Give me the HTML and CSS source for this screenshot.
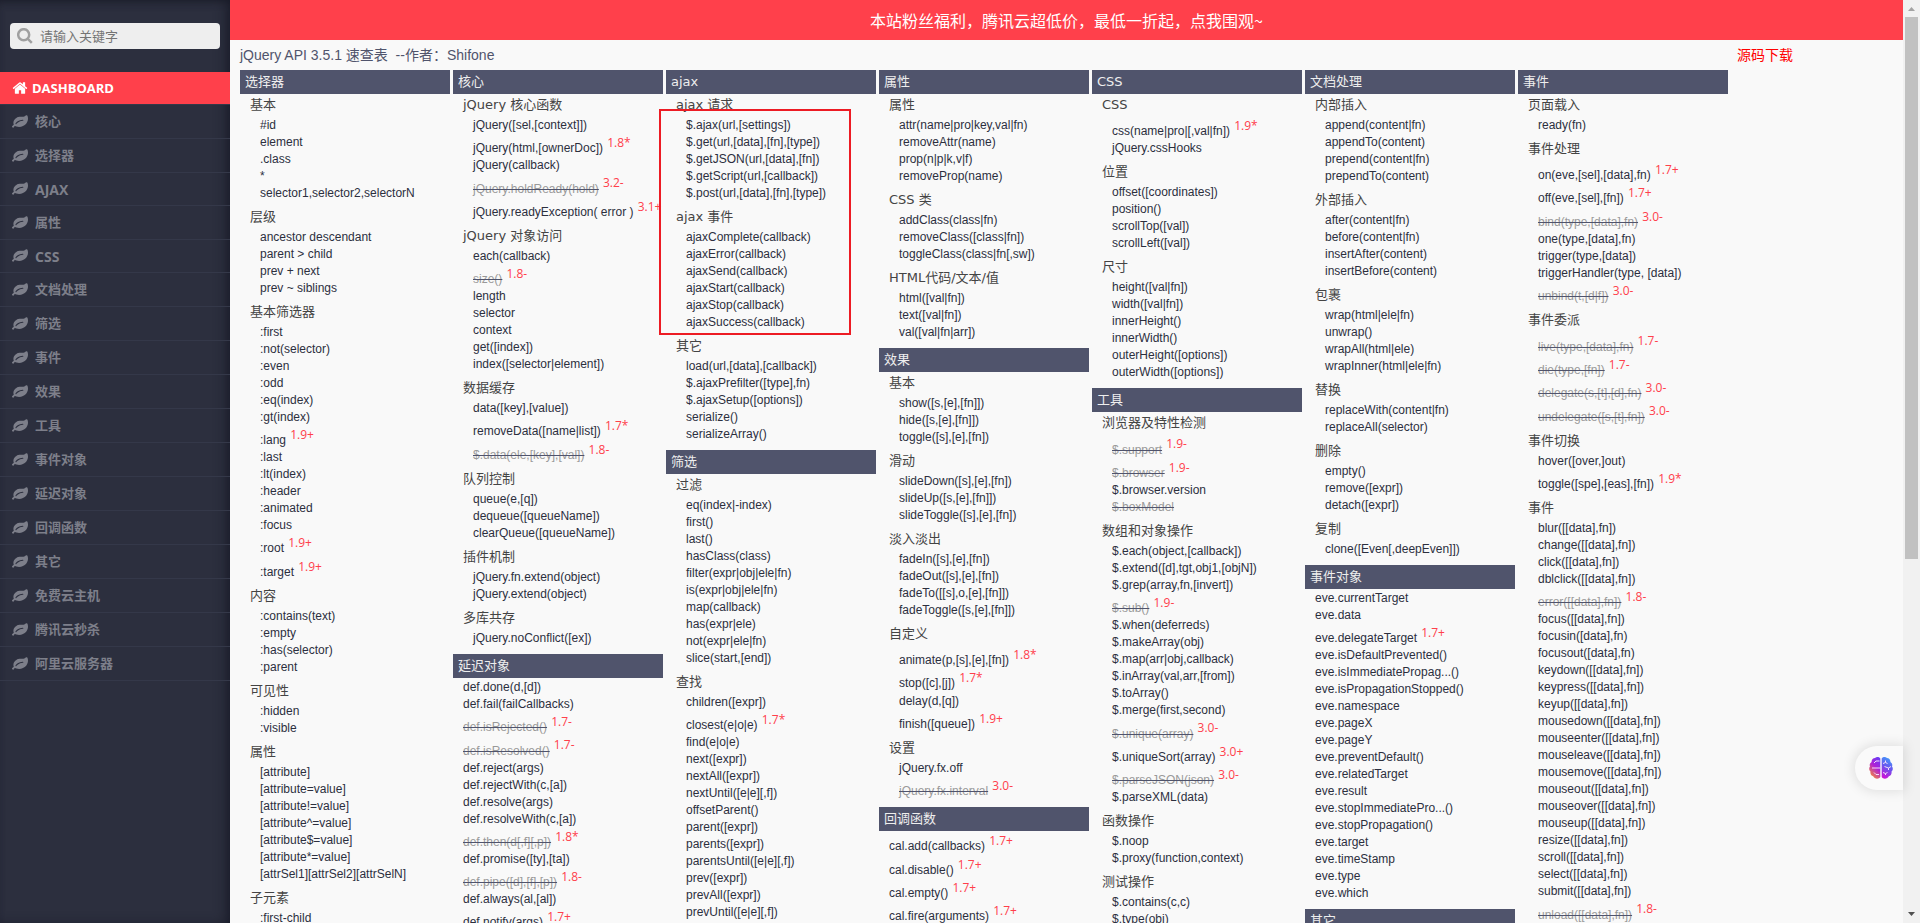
FILE: index.html
```html
<!DOCTYPE html>
<html lang="zh-CN">
<head>
<meta charset="utf-8">
<title>jQuery API 3.5.1 速查表</title>
<link rel="stylesheet" href="styles.css">
</head>
<body>
<svg class="sprite" aria-hidden="true">
<symbol id="leaf" viewBox="0 0 1792 1792"><path d="M1280 704q0-26-19-45t-45-19q-172 0-318 49.500t-259.500 134-234.500 206.500q-20 20-20 42 0 26 19 45t45 19q24 0 45-19 27-24 74-71t67-66q137-124 268.500-176t313.500-52q26 0 45-19t19-45zm512-198q0 95-20 193-46 224-184.500 383t-357.500 268q-214 108-438 108-148 0-286-47-15-5-88-42t-96-37q-16 0-39.500 32t-45 70-52.500 70-60.500 32q-43 0-63.500-17.500t-45.500-59.500q-2-4-6-11t-5.500-10-3-9.500-1.500-13.500q0-35 31-73.500t68-65.500 68-56 31-48q0-4-14-38t-16-44q-9-51-9-104 0-115 43.500-220t119-184.500 170.500-139 204-95.500q55-18 145-25.500t179.500-9 178.500-6 163.500-24 113.500-56.500l29.500-29.500 29.500-28 27-20 36.500-16 43.500-4.500q39 0 70.500 46t47.500 112 24 124 8 96z"/></symbol>
<symbol id="home" viewBox="0 0 1664 1792"><path d="M1408 992v480q0 26-19 45t-45 19H960v-384H704v384H320q-26 0-45-19t-19-45V992q0-1 .5-3t.5-3l575-474 575 474q1 2 1 6zm223-69l-62 74q-8 9-21 11h-3q-13 0-21-7L832 424 140 1001q-12 8-24 7-13-2-21-11l-62-74q-8-10-7-23.500t11-21.500l719-599q32-26 76-26t76 26l244 204V288q0-14 9-23t23-9h192q14 0 23 9t9 23v408l219 182q10 8 11 21.500t-7 23.500z"/></symbol>
</svg>
<div class="shell">
<aside class="sidebar">
<form class="search">
<label class="search-box"><svg class="search-icon" viewBox="0 0 16 16" aria-hidden="true"><circle cx="6.700" cy="6.700" r="5.500"/><path d="M10.800 10.800l4 4"/></svg><input type="search" aria-label="搜索" placeholder="请输入关键字"></label>
</form>
<nav class="menu">
<a class="menu-home" href="#"><svg><use href="#home"/></svg>DASHBOARD</a>
<a href="#"><svg><use href="#leaf"/></svg>核心</a>
<a href="#"><svg><use href="#leaf"/></svg>选择器</a>
<a class="latin" href="#"><svg><use href="#leaf"/></svg>AJAX</a>
<a href="#"><svg><use href="#leaf"/></svg>属性</a>
<a class="latin" href="#"><svg><use href="#leaf"/></svg>CSS</a>
<a href="#"><svg><use href="#leaf"/></svg>文档处理</a>
<a href="#"><svg><use href="#leaf"/></svg>筛选</a>
<a href="#"><svg><use href="#leaf"/></svg>事件</a>
<a href="#"><svg><use href="#leaf"/></svg>效果</a>
<a href="#"><svg><use href="#leaf"/></svg>工具</a>
<a href="#"><svg><use href="#leaf"/></svg>事件对象</a>
<a href="#"><svg><use href="#leaf"/></svg>延迟对象</a>
<a href="#"><svg><use href="#leaf"/></svg>回调函数</a>
<a href="#"><svg><use href="#leaf"/></svg>其它</a>
<a href="#"><svg><use href="#leaf"/></svg>免费云主机</a>
<a href="#"><svg><use href="#leaf"/></svg>腾讯云秒杀</a>
<a href="#"><svg><use href="#leaf"/></svg>阿里云服务器</a>
</nav>
</aside>
<main class="main">
<a class="banner" href="#">本站粉丝福利，腾讯云超低价，最低一折起，点我围观~</a>
<header class="title"><h1>jQuery API 3.5.1 速查表&nbsp; --作者：Shifone</h1><a href="#">源码下载</a></header>
<div class="columns">

<section class="column">
<h2>选择器</h2>
<h3>基本</h3>
<ul>
<li><a href="#">#id</a></li>
<li><a href="#">element</a></li>
<li><a href="#">.class</a></li>
<li><a href="#">*</a></li>
<li><a href="#">selector1,selector2,selectorN</a></li>
</ul>
<h3>层级</h3>
<ul>
<li><a href="#">ancestor descendant</a></li>
<li><a href="#">parent &gt; child</a></li>
<li><a href="#">prev + next</a></li>
<li><a href="#">prev ~ siblings</a></li>
</ul>
<h3>基本筛选器</h3>
<ul>
<li><a href="#">:first</a></li>
<li><a href="#">:not(selector)</a></li>
<li><a href="#">:even</a></li>
<li><a href="#">:odd</a></li>
<li><a href="#">:eq(index)</a></li>
<li><a href="#">:gt(index)</a></li>
<li><a href="#">:lang</a> <sup>1.9+</sup></li>
<li><a href="#">:last</a></li>
<li><a href="#">:lt(index)</a></li>
<li><a href="#">:header</a></li>
<li><a href="#">:animated</a></li>
<li><a href="#">:focus</a></li>
<li><a href="#">:root</a> <sup>1.9+</sup></li>
<li><a href="#">:target</a> <sup>1.9+</sup></li>
</ul>
<h3>内容</h3>
<ul>
<li><a href="#">:contains(text)</a></li>
<li><a href="#">:empty</a></li>
<li><a href="#">:has(selector)</a></li>
<li><a href="#">:parent</a></li>
</ul>
<h3>可见性</h3>
<ul>
<li><a href="#">:hidden</a></li>
<li><a href="#">:visible</a></li>
</ul>
<h3>属性</h3>
<ul>
<li><a href="#">[attribute]</a></li>
<li><a href="#">[attribute=value]</a></li>
<li><a href="#">[attribute!=value]</a></li>
<li><a href="#">[attribute^=value]</a></li>
<li><a href="#">[attribute$=value]</a></li>
<li><a href="#">[attribute*=value]</a></li>
<li><a href="#">[attrSel1][attrSel2][attrSelN]</a></li>
</ul>
<h3>子元素</h3>
<ul>
<li><a href="#">:first-child</a></li>
</ul>
</section>

<section class="column">
<h2>核心</h2>
<h3>jQuery 核心函数</h3>
<ul>
<li><a href="#">jQuery([sel,[context]])</a></li>
<li><a href="#">jQuery(html,[ownerDoc])</a> <sup>1.8*</sup></li>
<li><a href="#">jQuery(callback)</a></li>
<li><s><a href="#">jQuery.holdReady(hold)</a></s> <sup>3.2-</sup></li>
<li><a href="#">jQuery.readyException( error )</a> <sup>3.1+</sup></li>
</ul>
<h3>jQuery 对象访问</h3>
<ul>
<li><a href="#">each(callback)</a></li>
<li><s><a href="#">size()</a></s> <sup>1.8-</sup></li>
<li><a href="#">length</a></li>
<li><a href="#">selector</a></li>
<li><a href="#">context</a></li>
<li><a href="#">get([index])</a></li>
<li><a href="#">index([selector|element])</a></li>
</ul>
<h3>数据缓存</h3>
<ul>
<li><a href="#">data([key],[value])</a></li>
<li><a href="#">removeData([name|list])</a> <sup>1.7*</sup></li>
<li><s><a href="#">$.data(ele,[key],[val])</a></s> <sup>1.8-</sup></li>
</ul>
<h3>队列控制</h3>
<ul>
<li><a href="#">queue(e,[q])</a></li>
<li><a href="#">dequeue([queueName])</a></li>
<li><a href="#">clearQueue([queueName])</a></li>
</ul>
<h3>插件机制</h3>
<ul>
<li><a href="#">jQuery.fn.extend(object)</a></li>
<li><a href="#">jQuery.extend(object)</a></li>
</ul>
<h3>多库共存</h3>
<ul>
<li><a href="#">jQuery.noConflict([ex])</a></li>
</ul>
<h2>延迟对象</h2>
<ul class="flat">
<li><a href="#">def.done(d,[d])</a></li>
<li><a href="#">def.fail(failCallbacks)</a></li>
<li><s><a href="#">def.isRejected()</a></s> <sup>1.7-</sup></li>
<li><s><a href="#">def.isResolved()</a></s> <sup>1.7-</sup></li>
<li><a href="#">def.reject(args)</a></li>
<li><a href="#">def.rejectWith(c,[a])</a></li>
<li><a href="#">def.resolve(args)</a></li>
<li><a href="#">def.resolveWith(c,[a])</a></li>
<li><s><a href="#">def.then(d[,f][,p])</a></s> <sup>1.8*</sup></li>
<li><a href="#">def.promise([ty],[ta])</a></li>
<li><s><a href="#">def.pipe([d],[f],[p])</a></s> <sup>1.8-</sup></li>
<li><a href="#">def.always(al,[al])</a></li>
<li><a href="#">def.notify(args)</a> <sup>1.7+</sup></li>
</ul>
</section>

<section class="column">
<div class="highlight" aria-hidden="true"></div>
<h2>ajax</h2>
<h3>ajax 请求</h3>
<ul>
<li><a href="#">$.ajax(url,[settings])</a></li>
<li><a href="#">$.get(url,[data],[fn],[type])</a></li>
<li><a href="#">$.getJSON(url,[data],[fn])</a></li>
<li><a href="#">$.getScript(url,[callback])</a></li>
<li><a href="#">$.post(url,[data],[fn],[type])</a></li>
</ul>
<h3>ajax 事件</h3>
<ul>
<li><a href="#">ajaxComplete(callback)</a></li>
<li><a href="#">ajaxError(callback)</a></li>
<li><a href="#">ajaxSend(callback)</a></li>
<li><a href="#">ajaxStart(callback)</a></li>
<li><a href="#">ajaxStop(callback)</a></li>
<li><a href="#">ajaxSuccess(callback)</a></li>
</ul>
<h3>其它</h3>
<ul>
<li><a href="#">load(url,[data],[callback])</a></li>
<li><a href="#">$.ajaxPrefilter([type],fn)</a></li>
<li><a href="#">$.ajaxSetup([options])</a></li>
<li><a href="#">serialize()</a></li>
<li><a href="#">serializeArray()</a></li>
</ul>
<h2>筛选</h2>
<h3>过滤</h3>
<ul>
<li><a href="#">eq(index|-index)</a></li>
<li><a href="#">first()</a></li>
<li><a href="#">last()</a></li>
<li><a href="#">hasClass(class)</a></li>
<li><a href="#">filter(expr|obj|ele|fn)</a></li>
<li><a href="#">is(expr|obj|ele|fn)</a></li>
<li><a href="#">map(callback)</a></li>
<li><a href="#">has(expr|ele)</a></li>
<li><a href="#">not(expr|ele|fn)</a></li>
<li><a href="#">slice(start,[end])</a></li>
</ul>
<h3>查找</h3>
<ul>
<li><a href="#">children([expr])</a></li>
<li><a href="#">closest(e|o|e)</a> <sup>1.7*</sup></li>
<li><a href="#">find(e|o|e)</a></li>
<li><a href="#">next([expr])</a></li>
<li><a href="#">nextAll([expr])</a></li>
<li><a href="#">nextUntil([e|e][,f])</a></li>
<li><a href="#">offsetParent()</a></li>
<li><a href="#">parent([expr])</a></li>
<li><a href="#">parents([expr])</a></li>
<li><a href="#">parentsUntil([e|e][,f])</a></li>
<li><a href="#">prev([expr])</a></li>
<li><a href="#">prevAll([expr])</a></li>
<li><a href="#">prevUntil([e|e][,f])</a></li>
</ul>
</section>

<section class="column">
<h2>属性</h2>
<h3>属性</h3>
<ul>
<li><a href="#">attr(name|pro|key,val|fn)</a></li>
<li><a href="#">removeAttr(name)</a></li>
<li><a href="#">prop(n|p|k,v|f)</a></li>
<li><a href="#">removeProp(name)</a></li>
</ul>
<h3>CSS 类</h3>
<ul>
<li><a href="#">addClass(class|fn)</a></li>
<li><a href="#">removeClass([class|fn])</a></li>
<li><a href="#">toggleClass(class|fn[,sw])</a></li>
</ul>
<h3>HTML代码/文本/值</h3>
<ul>
<li><a href="#">html([val|fn])</a></li>
<li><a href="#">text([val|fn])</a></li>
<li><a href="#">val([val|fn|arr])</a></li>
</ul>
<h2>效果</h2>
<h3>基本</h3>
<ul>
<li><a href="#">show([s,[e],[fn]])</a></li>
<li><a href="#">hide([s,[e],[fn]])</a></li>
<li><a href="#">toggle([s],[e],[fn])</a></li>
</ul>
<h3>滑动</h3>
<ul>
<li><a href="#">slideDown([s],[e],[fn])</a></li>
<li><a href="#">slideUp([s,[e],[fn]])</a></li>
<li><a href="#">slideToggle([s],[e],[fn])</a></li>
</ul>
<h3>淡入淡出</h3>
<ul>
<li><a href="#">fadeIn([s],[e],[fn])</a></li>
<li><a href="#">fadeOut([s],[e],[fn])</a></li>
<li><a href="#">fadeTo([[s],o,[e],[fn]])</a></li>
<li><a href="#">fadeToggle([s,[e],[fn]])</a></li>
</ul>
<h3>自定义</h3>
<ul>
<li><a href="#">animate(p,[s],[e],[fn])</a> <sup>1.8*</sup></li>
<li><a href="#">stop([c],[j])</a> <sup>1.7*</sup></li>
<li><a href="#">delay(d,[q])</a></li>
<li><a href="#">finish([queue])</a> <sup>1.9+</sup></li>
</ul>
<h3>设置</h3>
<ul>
<li><a href="#">jQuery.fx.off</a></li>
<li><s><a href="#">jQuery.fx.interval</a></s> <sup>3.0-</sup></li>
</ul>
<h2>回调函数</h2>
<ul class="flat">
<li><a href="#">cal.add(callbacks)</a> <sup>1.7+</sup></li>
<li><a href="#">cal.disable()</a> <sup>1.7+</sup></li>
<li><a href="#">cal.empty()</a> <sup>1.7+</sup></li>
<li><a href="#">cal.fire(arguments)</a> <sup>1.7+</sup></li>
</ul>
</section>

<section class="column">
<h2>CSS</h2>
<h3>CSS</h3>
<ul>
<li><a href="#">css(name|pro|[,val|fn])</a> <sup>1.9*</sup></li>
<li><a href="#">jQuery.cssHooks</a></li>
</ul>
<h3>位置</h3>
<ul>
<li><a href="#">offset([coordinates])</a></li>
<li><a href="#">position()</a></li>
<li><a href="#">scrollTop([val])</a></li>
<li><a href="#">scrollLeft([val])</a></li>
</ul>
<h3>尺寸</h3>
<ul>
<li><a href="#">height([val|fn])</a></li>
<li><a href="#">width([val|fn])</a></li>
<li><a href="#">innerHeight()</a></li>
<li><a href="#">innerWidth()</a></li>
<li><a href="#">outerHeight([options])</a></li>
<li><a href="#">outerWidth([options])</a></li>
</ul>
<h2>工具</h2>
<h3>浏览器及特性检测</h3>
<ul>
<li><s><a href="#">$.support</a></s> <sup>1.9-</sup></li>
<li><s><a href="#">$.browser</a></s> <sup>1.9-</sup></li>
<li><a href="#">$.browser.version</a></li>
<li><s><a href="#">$.boxModel</a></s></li>
</ul>
<h3>数组和对象操作</h3>
<ul>
<li><a href="#">$.each(object,[callback])</a></li>
<li><a href="#">$.extend([d],tgt,obj1,[objN])</a></li>
<li><a href="#">$.grep(array,fn,[invert])</a></li>
<li><s><a href="#">$.sub()</a></s> <sup>1.9-</sup></li>
<li><a href="#">$.when(deferreds)</a></li>
<li><a href="#">$.makeArray(obj)</a></li>
<li><a href="#">$.map(arr|obj,callback)</a></li>
<li><a href="#">$.inArray(val,arr,[from])</a></li>
<li><a href="#">$.toArray()</a></li>
<li><a href="#">$.merge(first,second)</a></li>
<li><s><a href="#">$.unique(array)</a></s> <sup>3.0-</sup></li>
<li><a href="#">$.uniqueSort(array)</a> <sup>3.0+</sup></li>
<li><s><a href="#">$.parseJSON(json)</a></s> <sup>3.0-</sup></li>
<li><a href="#">$.parseXML(data)</a></li>
</ul>
<h3>函数操作</h3>
<ul>
<li><a href="#">$.noop</a></li>
<li><a href="#">$.proxy(function,context)</a></li>
</ul>
<h3>测试操作</h3>
<ul>
<li><a href="#">$.contains(c,c)</a></li>
<li><a href="#">$.type(obj)</a></li>
</ul>
</section>

<section class="column">
<h2>文档处理</h2>
<h3>内部插入</h3>
<ul>
<li><a href="#">append(content|fn)</a></li>
<li><a href="#">appendTo(content)</a></li>
<li><a href="#">prepend(content|fn)</a></li>
<li><a href="#">prependTo(content)</a></li>
</ul>
<h3>外部插入</h3>
<ul>
<li><a href="#">after(content|fn)</a></li>
<li><a href="#">before(content|fn)</a></li>
<li><a href="#">insertAfter(content)</a></li>
<li><a href="#">insertBefore(content)</a></li>
</ul>
<h3>包裹</h3>
<ul>
<li><a href="#">wrap(html|ele|fn)</a></li>
<li><a href="#">unwrap()</a></li>
<li><a href="#">wrapAll(html|ele)</a></li>
<li><a href="#">wrapInner(html|ele|fn)</a></li>
</ul>
<h3>替换</h3>
<ul>
<li><a href="#">replaceWith(content|fn)</a></li>
<li><a href="#">replaceAll(selector)</a></li>
</ul>
<h3>删除</h3>
<ul>
<li><a href="#">empty()</a></li>
<li><a href="#">remove([expr])</a></li>
<li><a href="#">detach([expr])</a></li>
</ul>
<h3>复制</h3>
<ul>
<li><a href="#">clone([Even[,deepEven]])</a></li>
</ul>
<h2>事件对象</h2>
<ul class="flat">
<li><a href="#">eve.currentTarget</a></li>
<li><a href="#">eve.data</a></li>
<li><a href="#">eve.delegateTarget</a> <sup>1.7+</sup></li>
<li><a href="#">eve.isDefaultPrevented()</a></li>
<li><a href="#">eve.isImmediatePropag...()</a></li>
<li><a href="#">eve.isPropagationStopped()</a></li>
<li><a href="#">eve.namespace</a></li>
<li><a href="#">eve.pageX</a></li>
<li><a href="#">eve.pageY</a></li>
<li><a href="#">eve.preventDefault()</a></li>
<li><a href="#">eve.relatedTarget</a></li>
<li><a href="#">eve.result</a></li>
<li><a href="#">eve.stopImmediatePro...()</a></li>
<li><a href="#">eve.stopPropagation()</a></li>
<li><a href="#">eve.target</a></li>
<li><a href="#">eve.timeStamp</a></li>
<li><a href="#">eve.type</a></li>
<li><a href="#">eve.which</a></li>
</ul>
<h2>其它</h2>
</section>

<section class="column">
<h2>事件</h2>
<h3>页面载入</h3>
<ul>
<li><a href="#">ready(fn)</a></li>
</ul>
<h3>事件处理</h3>
<ul>
<li><a href="#">on(eve,[sel],[data],fn)</a> <sup>1.7+</sup></li>
<li><a href="#">off(eve,[sel],[fn])</a> <sup>1.7+</sup></li>
<li><s><a href="#">bind(type,[data],fn)</a></s> <sup>3.0-</sup></li>
<li><a href="#">one(type,[data],fn)</a></li>
<li><a href="#">trigger(type,[data])</a></li>
<li><a href="#">triggerHandler(type, [data])</a></li>
<li><s><a href="#">unbind(t,[d|f])</a></s> <sup>3.0-</sup></li>
</ul>
<h3>事件委派</h3>
<ul>
<li><s><a href="#">live(type,[data],fn)</a></s> <sup>1.7-</sup></li>
<li><s><a href="#">die(type,[fn])</a></s> <sup>1.7-</sup></li>
<li><s><a href="#">delegate(s,[t],[d],fn)</a></s> <sup>3.0-</sup></li>
<li><s><a href="#">undelegate([s,[t],fn])</a></s> <sup>3.0-</sup></li>
</ul>
<h3>事件切换</h3>
<ul>
<li><a href="#">hover([over,]out)</a></li>
<li><a href="#">toggle([spe],[eas],[fn])</a> <sup>1.9*</sup></li>
</ul>
<h3>事件</h3>
<ul>
<li><a href="#">blur([[data],fn])</a></li>
<li><a href="#">change([[data],fn])</a></li>
<li><a href="#">click([[data],fn])</a></li>
<li><a href="#">dblclick([[data],fn])</a></li>
<li><s><a href="#">error([[data],fn])</a></s> <sup>1.8-</sup></li>
<li><a href="#">focus([[data],fn])</a></li>
<li><a href="#">focusin([data],fn)</a></li>
<li><a href="#">focusout([data],fn)</a></li>
<li><a href="#">keydown([[data],fn])</a></li>
<li><a href="#">keypress([[data],fn])</a></li>
<li><a href="#">keyup([[data],fn])</a></li>
<li><a href="#">mousedown([[data],fn])</a></li>
<li><a href="#">mouseenter([[data],fn])</a></li>
<li><a href="#">mouseleave([[data],fn])</a></li>
<li><a href="#">mousemove([[data],fn])</a></li>
<li><a href="#">mouseout([[data],fn])</a></li>
<li><a href="#">mouseover([[data],fn])</a></li>
<li><a href="#">mouseup([[data],fn])</a></li>
<li><a href="#">resize([[data],fn])</a></li>
<li><a href="#">scroll([[data],fn])</a></li>
<li><a href="#">select([[data],fn])</a></li>
<li><a href="#">submit([[data],fn])</a></li>
<li><s><a href="#">unload([[data],fn])</a></s> <sup>1.8-</sup></li>
</ul>
</section>
</div>
<button class="assistant" type="button" aria-label="助手">
<svg viewBox="0 0 24 24" aria-hidden="true">
<defs>
<linearGradient id="left-lobe" x1="0.800" y1="0" x2="0.300" y2="1"><stop offset="0" stop-color="#6a3df5"/><stop offset="0.450" stop-color="#b01fd6"/><stop offset="1" stop-color="#f58a3a"/></linearGradient>
<linearGradient id="right-lobe" x1="0.700" y1="0" x2="0.400" y2="1"><stop offset="0" stop-color="#3fa0fb"/><stop offset="0.500" stop-color="#6a54ee"/><stop offset="1" stop-color="#c914d8"/></linearGradient>
</defs>
<path fill="url(#left-lobe)" d="M11.300 2.500C10.500.800 7.500.500 6 2 4 2 2.300 4 2.600 6 .800 7 .300 9 1 10.500-.300 12 0 14.500 1.500 15.500c-.500 2 .700 4.300 2.700 4.800 1.200 2.700 5.600 3.200 7.100.700z"/>
<path fill="url(#right-lobe)" d="M12.700 2.500C13.500.800 16.500.500 18 2c2 0 3.700 2 3.400 4 1.800 1 2.300 3 1.600 4.500 1.300 1.500 1 4-.500 5 .500 2-.700 4.300-2.700 4.800-1.200 2.700-5.600 3.200-7.100.700z"/>
<path class="folds" d="M10.500 5H7L5 7M3 12h8.300M5 16.500l2 2h3M14 7.500l2.500-1V4.500M16.500 6.500l2 1M15.500 10.500l4 1.500 2.500-1.500M19.500 12v2M14 16.500l2.500 1 2-1M16.500 17.500v1.500"/>
</svg>
</button>
</main>
<div class="scrollbar" aria-hidden="true">
<svg class="arrow arrow-up" viewBox="0 0 7 4"><path d="M0 4L3.500 0 7 4z"/></svg>
<div class="track"><div class="thumb"></div></div>
<svg class="arrow" viewBox="0 0 7 4"><path d="M0 0h7L3.500 4z"/></svg>
</div>
</div>
</body>
</html>
```
FILE: styles.css
```css
* { box-sizing: border-box; }

body {
  margin: 0;
  background: #f9f9f9;
  color: #50546c;
  font-family: "DejaVu Sans", "Noto Sans CJK SC", sans-serif;
  font-size: 13px;
}

a { color: inherit; text-decoration: none; }

.sprite { display: none; }

.shell {
  display: flex;
  height: 100vh;
  overflow: hidden;
}

/* Sidebar */
.sidebar {
  flex: none;
  width: 230px;
  background: #2c2f3e;
  box-shadow: inset -6px 0 14px -4px #171926, inset 0 6px 10px -6px #1c1e2b;
}

.search { padding: 23px 10px; }

.search-box {
  display: flex;
  align-items: center;
  gap: 7px;
  height: 26px;
  padding: 0 7px;
  border-radius: 4px;
  background: #eee;
}

.search-icon {
  flex: none;
  width: 16px;
  height: 16px;
  fill: none;
  stroke: #a0a0a0;
  stroke-width: 2.5;
}

.search-box input {
  flex: 1;
  min-width: 0;
  padding: 0;
  border: 0;
  outline: 0;
  background: none;
  font: 13px/26px "Noto Sans CJK SC", sans-serif;
}

.search-box input::placeholder { color: #757575; }

.menu a {
  display: flex;
  align-items: center;
  gap: 7px;
  height: 34px;
  padding-left: 12px;
  border-bottom: 1px solid #343849;
  color: #7d7f8a;
  font: bold 13px/33px "Open Sans", "Noto Sans CJK SC", sans-serif;
}

.menu svg {
  width: 16px;
  height: 16px;
  fill: currentColor;
}

.menu a.latin {
  height: 33px;
  font-size: 14px;
}

.menu a.menu-home {
  gap: 4px;
  height: 33px;
  background: #ff404b;
  background-clip: padding-box;
  color: #fff;
}

/* Content */
.main {
  position: relative;
  flex: 1;
  min-width: 0;
}

.banner {
  display: block;
  background: #ff404b;
  color: #fff;
  font: 16px/40px "Noto Sans CJK SC", sans-serif;
  text-align: center;
}

.title {
  display: flex;
  justify-content: space-between;
  padding: 0 110px 0 10px;
  font: 14px/30px "Liberation Sans", "Noto Sans CJK SC", sans-serif;
}

.title h1 {
  margin: 0;
  font: inherit;
}

.title a { color: #f00; }

.columns {
  display: flex;
  gap: 3px;
  padding-left: 10px;
}

.column {
  position: relative;
  flex: none;
  width: 210px;
}

.column h2 {
  margin: 8px 0 0;
  padding-left: 5px;
  background: #50546c;
  color: #eee;
  font-size: 13px;
  font-weight: 400;
  line-height: 24px;
}

.column h2:first-of-type { margin-top: 0; }

.column h3 {
  margin: 0;
  padding-left: 10px;
  color: #444;
  font-size: 13px;
  font-weight: 400;
  line-height: 22px;
}

.column ul {
  margin: 0 0 5px;
  padding: 0 0 0 20px;
  list-style: none;
  line-height: 17px;
  white-space: nowrap;
}

.column ul.flat { padding-left: 10px; }

.column li a {
  color: #2c2f3e;
  font-family: "Liberation Sans", sans-serif;
  font-size: 12px;
  line-height: 14px;
}

.column s a { color: #999; }

.column sup {
  color: #ff404b;
  font-family: "Open Sans", sans-serif;
  font-size: 12px;
  line-height: 19px;
  vertical-align: super;
}

.highlight {
  position: absolute;
  top: 39px;
  left: -7px;
  width: 192px;
  height: 226px;
  border: 2px solid #ed1c24;
}

/* Floating assistant tab */
.assistant {
  position: absolute;
  right: 0;
  bottom: 133px;
  display: flex;
  align-items: center;
  width: 48px;
  height: 44px;
  padding: 0 0 0 14px;
  border: 0;
  border-radius: 22px 0 0 22px;
  background: #fafafa;
  box-shadow: 0 0 12px 2px rgba(0, 0, 0, 0.1);
}

.assistant svg {
  width: 24px;
  height: 24px;
}

.assistant .folds {
  fill: none;
  stroke: #f3dcfa;
  stroke-width: 1;
}

/* Scrollbar */
.scrollbar {
  display: flex;
  flex: none;
  flex-direction: column;
  align-items: center;
  justify-content: space-between;
  width: 17px;
  padding: 7px 2px;
  background: #f1f1f1;
}

.arrow {
  width: 7px;
  height: 4px;
  fill: #505050;
}

.arrow-up { fill: #a3a3a3; }

.track {
  flex: 1;
  align-self: stretch;
  margin: 6px 0;
}

.thumb {
  height: 61%;
  background: #c1c1c1;
}
```
